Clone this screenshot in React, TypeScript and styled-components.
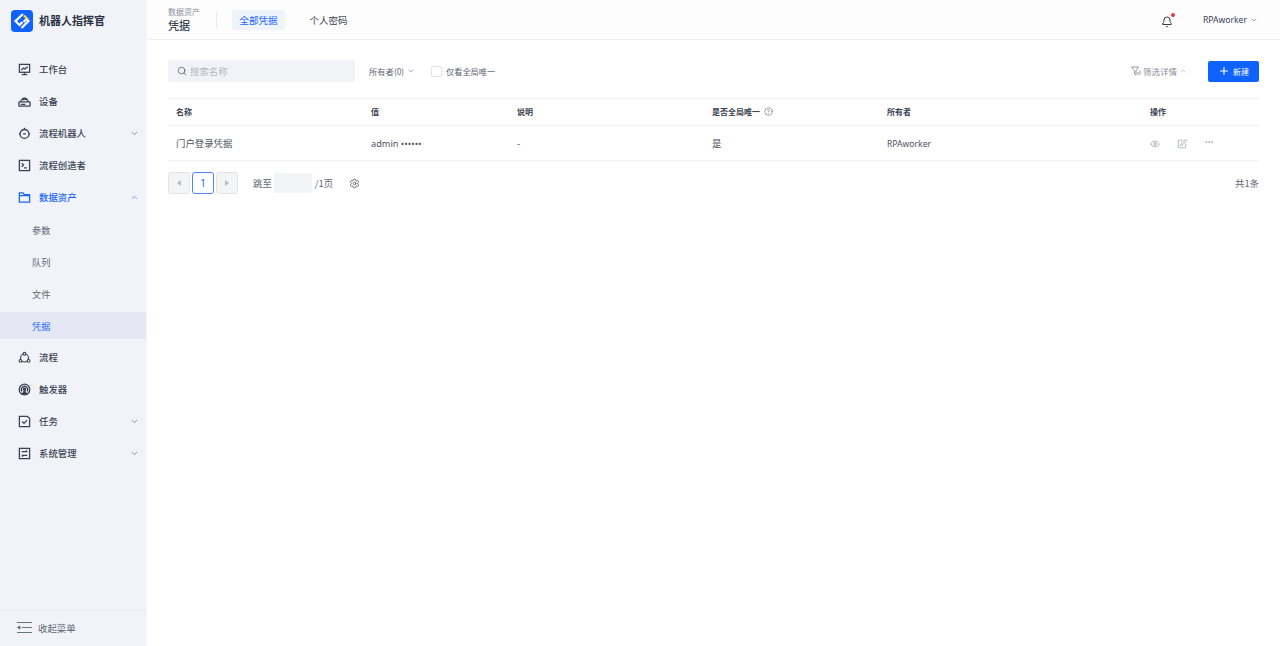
import React from 'react'
import styled, { createGlobalStyle } from 'styled-components'
import { ChevronDown, ChevronUp, Search, Plus, Eye, SquarePen, Ellipsis, Settings, Bell, CircleHelp } from 'lucide-react'

const GlobalStyle = createGlobalStyle`
  html, body {
    margin: 0;
    padding: 0;
    height: 100%;
    background: #fff;
    font-family: "Noto Sans CJK SC", "Noto Sans", sans-serif;
    font-size: 9.4px;
    color: #3b4354;
  }
  * { box-sizing: border-box; }
`

const Layout = styled.div`
  display: flex;
  width: 1280px;
  height: 646px;
  overflow: hidden;
`

const Sidebar = styled.aside`
  width: 147px;
  flex: none;
  display: flex;
  flex-direction: column;
  background: #f1f3f8;
  border-right: 1px solid #f5f6f9;
`

const Brand = styled.div`
  height: 53px;
  padding: 10px 0 0 11px;
  display: flex;
  align-items: flex-start;
  gap: 6px;
  font-size: 11px;
  font-weight: 700;
  line-height: 21px;
  color: #2a3142;
`

const Nav = styled.nav`
  flex: 1;
  display: flex;
  flex-direction: column;
`

const NavItem = styled.div<{ $active?: boolean }>`
  height: 32px;
  display: flex;
  align-items: center;
  padding: 0 7px 0 18px;
  gap: 8px;
  color: ${p => (p.$active ? '#1a66ff' : '#3b4354')};
  font-weight: 500;
  svg.main { flex: none; }
  span { flex: 1; }
`

const SubItem = styled.div<{ $active?: boolean }>`
  height: 27px;
  margin: 3px 0 2px;
  display: flex;
  align-items: center;
  padding-left: 32px;
  font-size: 9.2px;
  color: ${p => (p.$active ? '#1a66ff' : '#5e6675')};
  background: ${p => (p.$active ? '#e5e8f4' : 'transparent')};
`

const Collapse = styled.div`
  height: 36px;
  border-top: 1px solid #e8eaf0;
  display: flex;
  align-items: center;
  padding: 0 0 2px 17px;
  gap: 6px;
  color: #5e6675;
`

const Main = styled.div`
  flex: 1;
  min-width: 0;
  display: flex;
  flex-direction: column;
`

const Header = styled.header`
  height: 40px;
  flex: none;
  display: flex;
  align-items: center;
  padding: 0 21px 0 21px;
  background: #fdfdfe;
  border-bottom: 1px solid #eef0f3;
`

const Crumb = styled.div`
  width: 48px;
  display: flex;
  flex-direction: column;
  small {
    font-size: 8px;
    line-height: 10px;
    color: #8a909c;
  }
  strong {
    font-size: 11px;
    line-height: 16px;
    font-weight: 500;
    color: #3b4354;
  }
`

const Divider = styled.div`
  width: 1px;
  height: 16px;
  background: #e8eaee;
  margin-right: 15px;
`

const Tab = styled.div<{ $active?: boolean }>`
  height: 20px;
  padding: 0 7.5px;
  margin-right: 17px;
  display: flex;
  align-items: center;
  border-radius: 2px;
  font-size: 9.5px;
  color: ${p => (p.$active ? '#1a66ff' : '#3b4354')};
  background: ${p => (p.$active ? '#eff3fc' : 'transparent')};
`

const HeaderRight = styled.div`
  margin-left: auto;
  display: flex;
  align-items: center;
  color: #3b4354;
`

const BellWrap = styled.div`
  position: relative;
  width: 12px;
  height: 12px;
  margin: 4px 30px 0 0;
  display: flex;
  color: #1c2230;
  i {
    position: absolute;
    top: -3px;
    right: -2px;
    width: 4px;
    height: 4px;
    border-radius: 50%;
    background: #f5333f;
  }
`

const User = styled.div`
  display: flex;
  align-items: center;
  gap: 3px;
  padding-right: 1px;
  font-family: "Noto Sans", sans-serif;
  font-size: 8.6px;
`

const Content = styled.main`
  padding: 20px 21px 0 21px;
`

const Toolbar = styled.div`
  height: 22px;
  display: flex;
  align-items: center;
  margin-bottom: 16px;
`

const SearchBox = styled.div`
  width: 187px;
  height: 22px;
  background: #f1f3f7;
  border-radius: 2px;
  display: flex;
  align-items: center;
  padding: 0 0 1px 9px;
  gap: 3px;
  color: #b4b9c3;
  margin-right: 14px;
  svg { color: #3b4354; }
`

const Owner = styled.div`
  display: flex;
  align-items: center;
  gap: 3px;
  width: 62px;
  color: #5e6675;
  font-size: 8.3px;
`

const CheckLabel = styled.label`
  display: flex;
  align-items: center;
  gap: 4px;
  color: #5e6675;
  font-size: 8.2px;
  i {
    width: 11px;
    height: 11px;
    border: 1px solid #dfe2e8;
    border-radius: 2px;
    background: #fff;
  }
`

const FilterToggle = styled.div`
  margin-left: auto;
  margin-right: 21px;
  display: flex;
  align-items: center;
  gap: 2px;
  color: #8a909c;
  font-size: 8.5px;
`

const NewButton = styled.button`
  width: 51px;
  height: 21px;
  border: none;
  border-radius: 2px;
  background: #0f62fe;
  color: #fff;
  font: inherit;
  font-size: 8px;
  display: flex;
  align-items: center;
  justify-content: center;
  gap: 3px;
  padding: 0;
`

const Table = styled.div`
  border-top: 1px solid #f1f2f5;
`

const Row = styled.div<{ $head?: boolean }>`
  display: grid;
  grid-template-columns: 195px 146px 195px 175px 263px 117px;
  height: ${p => (p.$head ? '27px' : '35px')};
  padding-bottom: ${p => (p.$head ? '1px' : '0')};
  align-items: center;
  border-bottom: 1px solid #f1f2f5;
  font-size: ${p => (p.$head ? '8px' : '9.4px')};
  font-weight: ${p => (p.$head ? 600 : 400)};
  color: ${p => (p.$head ? '#3b4354' : '#4b5261')};
`

const Cell = styled.div`
  padding-left: 8px;
  display: flex;
  align-items: center;
  gap: 4px;
  white-space: nowrap;
`

const Latin = styled.span`
  padding-top: 1px;
  font-family: "Noto Sans", sans-serif;
  font-size: 8.6px;
`

const Secret = styled.span`
  font-family: "Noto Sans", sans-serif;
  font-size: 9.2px;
`

const Actions = styled.div`
  display: flex;
  align-items: center;
  padding-top: 1px;
  color: #858b98;
  gap: 17px;
  svg:last-child { margin-top: -3px; }
`

const Pager = styled.div`
  display: flex;
  align-items: center;
  height: 22px;
  margin-top: 11px;
`

const PageBtn = styled.div<{ $active?: boolean; $disabled?: boolean }>`
  width: 22px;
  height: 22px;
  margin-right: 2px;
  border-radius: 3px;
  display: flex;
  align-items: center;
  justify-content: center;
  font-family: "Noto Sans", sans-serif;
  font-size: 10px;
  color: #1a66ff;
  background: ${p => (p.$disabled ? '#f3f4f6' : '#fff')};
  border: 1px solid ${p => (p.$active ? '#4f86f7' : '#e2e4e9')};
`

const Arrow = styled.i<{ $left?: boolean }>`
  width: 0;
  height: 0;
  border-top: 3.5px solid transparent;
  border-bottom: 3.5px solid transparent;
  ${p => (p.$left ? 'border-right: 4px solid #b4b8c0;' : 'border-left: 4px solid #b4b8c0;')}
`

const Jump = styled.div`
  margin-left: 13px;
  display: flex;
  align-items: center;
  color: #5e6675;
  gap: 2.5px;
`

const JumpInput = styled.div`
  width: 38px;
  height: 20px;
  background: #f3f4f7;
  border-radius: 2px;
`

const PagerGear = styled.div`
  margin-left: 16px;
  display: flex;
  color: #3b4354;
`

const Total = styled.div`
  margin-left: auto;
  color: #5e6675;
`

const Logo = () => (
  <svg width="22" height="22" viewBox="0 0 22 22">
    <rect width="22" height="22" rx="4" fill="#0f62fe" />
    <path d="M12 4 4.5 11l4 4 3-3" fill="none" stroke="#fff" strokeWidth="2.2" />
    <path d="M10.5 18l7-7-2-2-3 3" fill="none" stroke="#fff" strokeWidth="2.2" />
    <path d="M13 5.5l4 4" stroke="#ffd23f" strokeWidth="2.2" />
  </svg>
)

const iconProps = {
  className: 'main',
  width: 13,
  height: 13,
  viewBox: '0 0 14 14',
  fill: 'none',
  stroke: 'currentColor',
  strokeWidth: 1.4,
}

const Icons = {
  monitor: (
    <svg {...iconProps}>
      <rect x="1.5" y="1.5" width="11" height="8.5" />
      <path d="M7 10v2.5M4 12.5h6M3.5 7.5 6 5.5l1.5 1L10.5 4" />
    </svg>
  ),
  device: (
    <svg {...iconProps}>
      <rect x="1" y="7.5" width="12" height="4.5" rx="0.5" />
      <path d="M3 7.5a4 4 0 0 1 8 0M5 5.5a2.5 2.5 0 0 1 4 0M3 10h5" />
    </svg>
  ),
  robot: (
    <svg {...iconProps}>
      <circle cx="7" cy="7.5" r="4.8" />
      <path d="M7 .8v2M1 7.5h1.2M11.8 7.5H13M5.5 7.5h3" />
    </svg>
  ),
  terminal: (
    <svg {...iconProps}>
      <rect x="1.5" y="1.5" width="11" height="11" />
      <path d="M4 4.5 6 6.5 4 8.5M6.5 9.5h3" />
    </svg>
  ),
  folder: (
    <svg {...iconProps}>
      <path d="M1.5 2h4l1.2 2h5.8v8h-11zM1.5 5h11" />
    </svg>
  ),
  flow: (
    <svg {...iconProps} strokeWidth={1.2}>
      <circle cx="7" cy="7.5" r="4.3" />
      <circle cx="7" cy="3" r="1.5" fill="#f1f3f8" />
      <circle cx="2.6" cy="10.6" r="1.5" fill="#f1f3f8" />
      <circle cx="11.4" cy="10.6" r="1.5" fill="#f1f3f8" />
    </svg>
  ),
  trigger: (
    <svg {...iconProps}>
      <circle cx="7" cy="7" r="5.7" />
      <path d="M4.2 9a3.4 3.4 0 1 1 5.6 0" />
      <circle cx="7" cy="6.8" r="1.2" fill="currentColor" />
      <path d="M4.5 12 7 8.5 9.5 12z" fill="currentColor" />
    </svg>
  ),
  task: (
    <svg {...iconProps}>
      <path d="M1.5 1.5h8.5l2.5 2v9h-11z" />
      <path d="M4.5 7l2 2 3.2-3.5" />
    </svg>
  ),
  system: (
    <svg {...iconProps}>
      <rect x="1.5" y="1.5" width="11" height="11" />
      <path d="M4 5h6M8.5 3.8 10 5M10 9H4M5.5 10.2 4 9" />
    </svg>
  ),
}

const Chevron: React.FC<{ up?: boolean; size?: number }> = ({ up, size = 9 }) =>
  up ? <ChevronUp size={size} strokeWidth={1.5} /> : <ChevronDown size={size} strokeWidth={1.5} />

const App: React.FC = () => (
  <Layout>
    <GlobalStyle />
    <Sidebar>
      <Brand>
        <Logo />
        机器人指挥官
      </Brand>
      <Nav>
        <NavItem>{Icons.monitor}<span>工作台</span></NavItem>
        <NavItem>{Icons.device}<span>设备</span></NavItem>
        <NavItem>{Icons.robot}<span>流程机器人</span><Chevron /></NavItem>
        <NavItem>{Icons.terminal}<span>流程创造者</span></NavItem>
        <NavItem $active>{Icons.folder}<span>数据资产</span><Chevron up /></NavItem>
        <SubItem>参数</SubItem>
        <SubItem>队列</SubItem>
        <SubItem>文件</SubItem>
        <SubItem $active>凭据</SubItem>
        <NavItem>{Icons.flow}<span>流程</span></NavItem>
        <NavItem>{Icons.trigger}<span>触发器</span></NavItem>
        <NavItem>{Icons.task}<span>任务</span><Chevron /></NavItem>
        <NavItem>{Icons.system}<span>系统管理</span><Chevron /></NavItem>
      </Nav>
      <Collapse>
        <svg width="15" height="13" viewBox="0 0 15 13" fill="none" stroke="#6b7280" strokeWidth="1">
          <path d="M0 1.5h15M5 6.5h10M0 11.5h15" />
          <path d="M0.5 6.5 3 5v3z" fill="#6b7280" />
        </svg>
        收起菜单
      </Collapse>
    </Sidebar>
    <Main>
      <Header>
        <Crumb>
          <small>数据资产</small>
          <strong>凭据</strong>
        </Crumb>
        <Divider />
        <Tab $active>全部凭据</Tab>
        <Tab>个人密码</Tab>
        <HeaderRight>
          <BellWrap>
            <Bell size={12} strokeWidth={1.8} />
            <i />
          </BellWrap>
          <User>
            RPAworker
            <Chevron size={8} />
          </User>
        </HeaderRight>
      </Header>
      <Content>
        <Toolbar>
          <SearchBox>
            <Search size={10} strokeWidth={1.6} />
            搜索名称
          </SearchBox>
          <Owner>
            所有者(0)
            <Chevron size={8} />
          </Owner>
          <CheckLabel>
            <i />
            仅看全局唯一
          </CheckLabel>
          <FilterToggle>
            <svg width="10" height="10" viewBox="0 0 10 10" fill="none" stroke="#8a909c" strokeWidth="0.9">
              <path d="M0.5 1h7L5 4.5V9L3.5 8V4.5zM7 6v3M9 4.5V9" />
            </svg>
            筛选详情
            <Chevron up size={8} />
          </FilterToggle>
          <NewButton>
            <Plus size={12} strokeWidth={2.2} />
            新建
          </NewButton>
        </Toolbar>
        <Table>
          <Row $head>
            <Cell>名称</Cell>
            <Cell>值</Cell>
            <Cell>说明</Cell>
            <Cell>
              是否全局唯一
              <CircleHelp size={9} strokeWidth={1.3} />
            </Cell>
            <Cell>所有者</Cell>
            <Cell>操作</Cell>
          </Row>
          <Row>
            <Cell>门户登录凭据</Cell>
            <Cell><Secret>admin ••••••</Secret></Cell>
            <Cell>-</Cell>
            <Cell>是</Cell>
            <Cell><Latin>RPAworker</Latin></Cell>
            <Cell>
              <Actions>
                <Eye size={10} strokeWidth={1.5} />
                <SquarePen size={10} strokeWidth={1.5} />
                <Ellipsis size={10} strokeWidth={1.5} />
              </Actions>
            </Cell>
          </Row>
        </Table>
        <Pager>
          <PageBtn $disabled><Arrow $left /></PageBtn>
          <PageBtn $active>1</PageBtn>
          <PageBtn $disabled><Arrow /></PageBtn>
          <Jump>
            跳至
            <JumpInput />
            /1页
          </Jump>
          <PagerGear><Settings size={11} strokeWidth={1.5} /></PagerGear>
          <Total>共1条</Total>
        </Pager>
      </Content>
    </Main>
  </Layout>
)

export default App
